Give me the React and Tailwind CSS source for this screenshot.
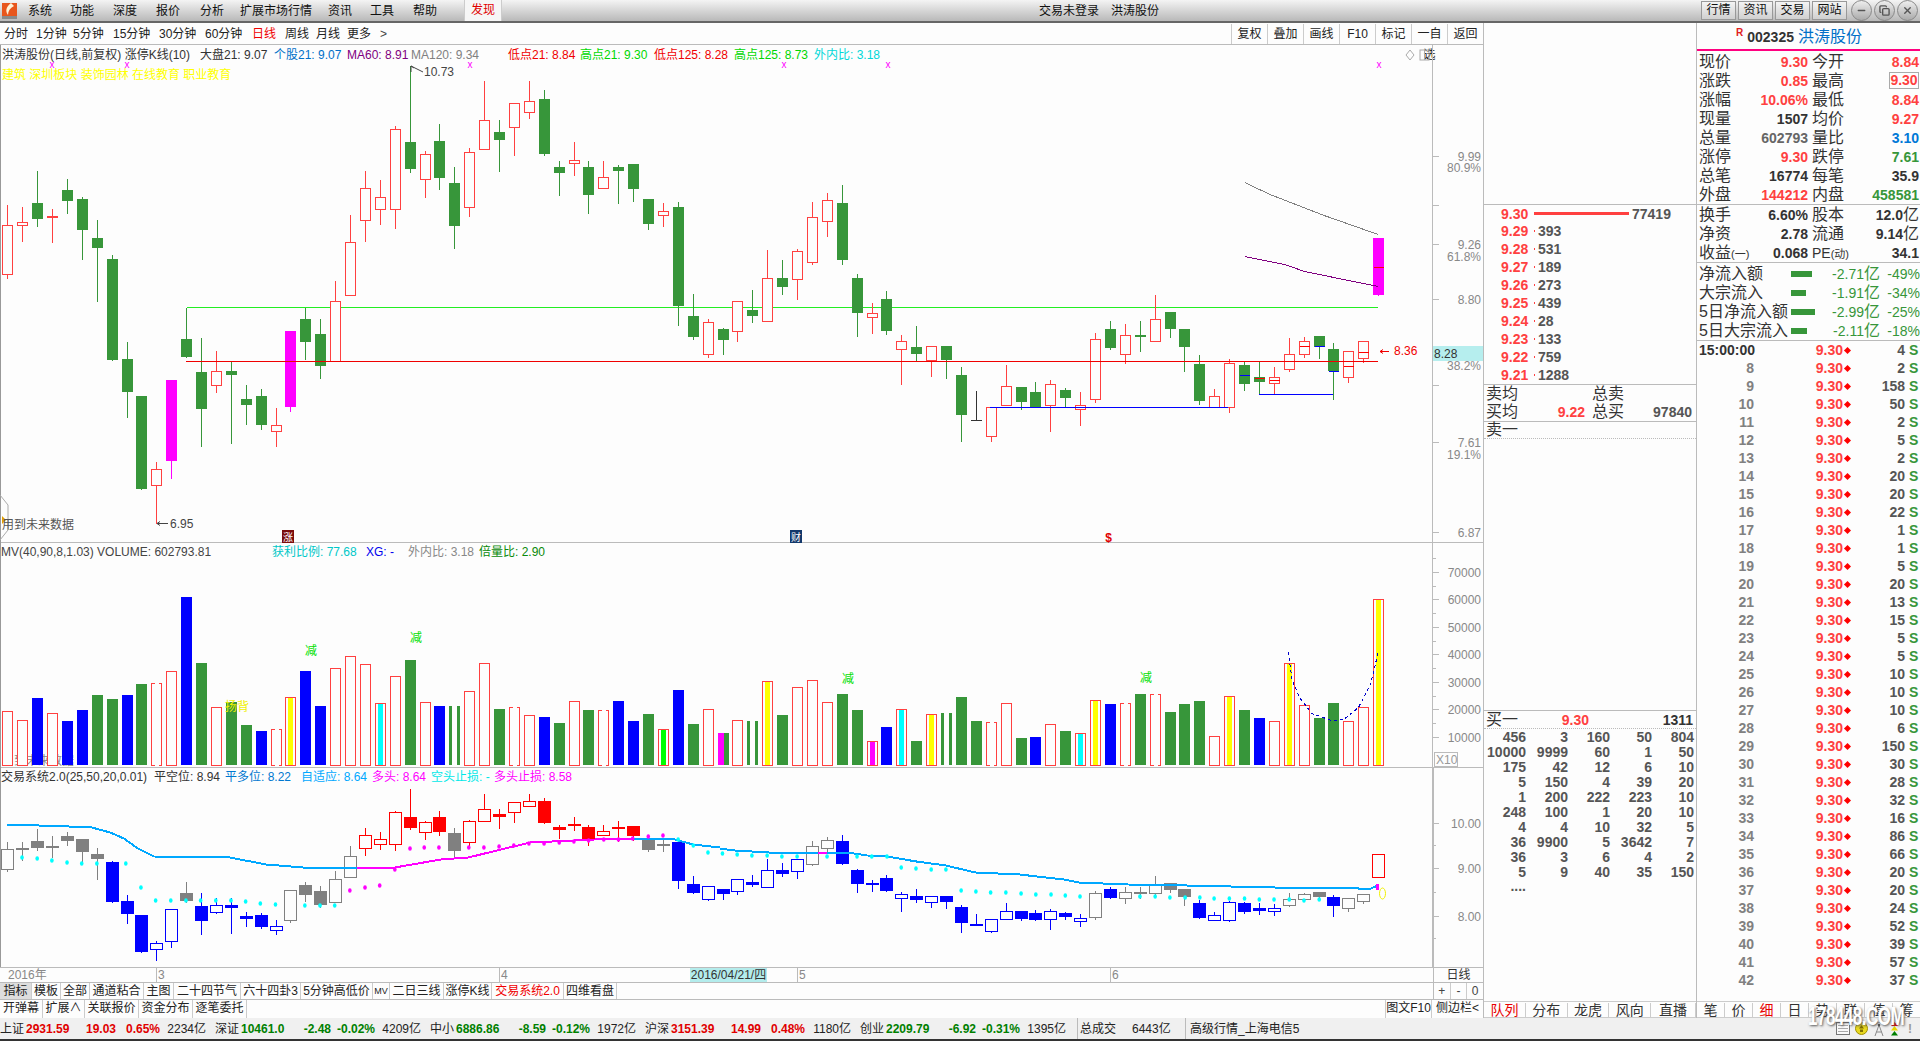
import React from "react";
import { Minus, Copy, X } from "lucide-react";

// pixel helpers: chart data was read in crop coordinates
const cx = (i) => Math.round(7.3 + 14.9 * i) + 0.5;
const y1 = (z) => Math.round(60 + z / 3) + 0.5;
const y2 = (z) => Math.round(540 + z / 3) + 0.5;
const fxA = (x) => x / 2.178;
const fxB = (x) => 720 + x / 2.036;

const RED = "#ff4040";
const GREEN = "#37963a";
const BLUE = "#0000ff";
const MAG = "#ff00ff";

// [wickTop, bodyTop, bodyBottom, wickBottom, type, tickY, tickColor]
const mainCandles = [
  [432, 496, 641, 654, "r"], [438, 487, 494, 543, "r"], [330, 429, 477, 498, "g"], [444, 468, 473, 546, "s"],
  [353, 390, 423, 459, "g"], [408, 417, 510, 597, "g"], [477, 534, 564, 723, "g"], [582, 597, 900, 900, "g"],
  [843, 897, 996, 1071, "g"], [1008, 1008, 1287, 1287, "g"], [1203, 1228, 1274, 1390, "r"], [960, 960, 1203, 1254, "m"],
  [742, 837, 891, 891, "g"], [831, 936, 1047, 1158, "g"], [870, 934, 974, 996, "r"], [900, 933, 945, 1149, "g"],
  [972, 1017, 1035, 1092, "g"], [984, 1008, 1095, 1107, "g"], [1041, 1096, 1114, 1158, "r"], [813, 813, 1041, 1053, "m"],
  [742, 777, 846, 897, "g"], [774, 822, 918, 954, "g"], [660, 724, 903, 903, "r"], [462, 547, 704, 704, "r"],
  [330, 385, 479, 543, "r"], [357, 412, 446, 492, "r"], [195, 208, 446, 504, "r"], [15, 246, 327, 336, "g"],
  [270, 283, 356, 411, "r"], [189, 243, 354, 387, "g"], [318, 369, 498, 564, "g"], [261, 277, 440, 468, "r"],
  [60, 181, 266, 266, "r"], [177, 216, 240, 333, "g"], [126, 130, 200, 285, "r"], [60, 124, 155, 174, "r"],
  [87, 117, 282, 285, "g"], [300, 321, 339, 405, "g"], [243, 301, 308, 345, "r"], [300, 321, 405, 459, "g"],
  [300, 352, 383, 384, "r"], [312, 321, 333, 429, "g"], [312, 312, 387, 423, "g"], [417, 417, 492, 507, "g"],
  [426, 454, 464, 498, "r"], [423, 441, 738, 795, "g"], [699, 768, 831, 837, "g"], [774, 787, 881, 891, "r"],
  [801, 807, 840, 882, "g"], [724, 724, 812, 843, "r"], [687, 750, 768, 786, "g"], [567, 655, 782, 782, "r"],
  [597, 654, 681, 702, "g"], [564, 574, 656, 717, "r"], [423, 472, 605, 612, "r"], [396, 421, 482, 528, "r"],
  [372, 429, 600, 612, "g"], [639, 654, 759, 828, "g"], [726, 760, 770, 819, "r"], [690, 717, 813, 822, "g"],
  [822, 844, 866, 972, "r"], [795, 861, 882, 903, "g"], [858, 859, 899, 948, "r"], [855, 858, 900, 954, "g"],
  [918, 945, 1065, 1143, "g"], [990, 1079, 1080, 1080, "k"], [1041, 1042, 1127, 1143, "r"], [912, 979, 1034, 1034, "r"],
  [981, 981, 1026, 1047, "g"], [963, 996, 1042, 1042, "g"], [957, 973, 1034, 1113, "r"], [981, 990, 1014, 1038, "g"],
  [993, 1036, 1048, 1095, "r"], [816, 838, 1016, 1026, "r"], [780, 807, 864, 867, "g"], [789, 826, 881, 909, "r"],
  [780, 825, 831, 873, "g"], [702, 778, 842, 843, "r"], [756, 756, 807, 831, "g"], [807, 807, 861, 933, "g"],
  [882, 912, 1023, 1032, "g"], [984, 1009, 1042, 1042, "r"], [894, 910, 1040, 1056, "r"],
  [900, 915, 972, 990, "g", 946, BLUE], [903, 951, 966, 1003, "g", 955, "#ff0000"], [918, 952, 968, 1003, "r", 960, "#ff0000"],
  [831, 883, 926, 932, "r"], [828, 844, 881, 891, "r", 859, "#ff0000"], [826, 828, 860, 894, "g", 859, BLUE],
  [846, 867, 934, 1017, "g", 934, BLUE], [870, 874, 950, 966, "r", 919, "#ff0000"], [844, 844, 893, 905, "r", 875, "#ff0000"],
  [534, 534, 705, 705, "m", 620, "#ff0000"],
];

// [top, kind, inner]  kind: r hollow, d broken hollow, b blue, g green, t two thin green
const volBars = [
  [514, "r"], [541, "r"], [471, "b"], [520, "r"], [540, "b"], [507, "b"], [462, "g"], [474, "g"], [462, "b"], [429, "g"],
  [429, "d"], [394, "r"], [168, "b"], [366, "g"], [502, "r"], [483, "g"], [552, "g"], [570, "b"], [567, "d"], [471, "r", "#ffff00"],
  [390, "b"], [495, "b"], [385, "r"], [349, "r"], [373, "r"], [490, "r", "#00ffff"], [409, "r"], [357, "g"], [487, "r"], [495, "b"],
  [495, "t"], [454, "r"], [370, "r"], [504, "g"], [502, "d"], [526, "r"], [528, "b"], [546, "g"], [484, "r"], [507, "g"],
  [510, "d"], [480, "b"], [540, "b"], [519, "g"], [567, "r", "#00ff00"], [447, "b"], [549, "g"], [507, "r"], [576, "g", MAG], [541, "r"],
  [540, "t"], [424, "r", "#ffff00"], [522, "g"], [442, "r"], [421, "r"], [487, "r"], [459, "g"], [507, "g"], [604, "r", MAG], [558, "b"],
  [508, "r", "#00ffff"], [600, "g"], [522, "r", "#ffff00"], [516, "t"], [468, "g"], [540, "g"], [546, "d"], [490, "r"], [591, "g"], [588, "b"],
  [552, "r"], [570, "g"], [579, "r", "#00ffff"], [481, "r", "#ffff00"], [489, "b"], [490, "d"], [459, "g"], [463, "d"], [513, "g"], [489, "g"],
  [480, "g"], [589, "r"], [468, "r", "#ffff00"], [507, "g"], [531, "b"], [544, "r"], [370, "r", "#ffff00"], [496, "r"], [531, "g"], [486, "g"],
  [544, "r"], [502, "r"], [178, "r", "#ffff00"],
];

// [wickTop, bodyTop, bodyBottom, wickBottom, colour, solid]
const G = "#808080";
const B = "#0000ff";
const R = "#ff0000";
const sysCandles = [
  [903, 928, 987, 993, G, 0], [903, 924, 930, 960, G, 1], [864, 903, 924, 930, G, 1], [885, 918, 920, 951, G, 0], [873, 888, 903, 915, G, 1],
  [894, 897, 936, 963, G, 1], [921, 942, 957, 1017, G, 1], [960, 966, 1086, 1086, B, 1], [1062, 1083, 1122, 1149, B, 1], [1125, 1125, 1236, 1236, B, 1],
  [1200, 1210, 1228, 1260, B, 0], [1108, 1108, 1202, 1221, B, 0], [1023, 1059, 1083, 1086, G, 1], [1056, 1098, 1143, 1182, B, 1], [1071, 1096, 1115, 1119, B, 0],
  [1071, 1095, 1103, 1179, B, 1], [1113, 1128, 1137, 1158, B, 1], [1116, 1125, 1161, 1164, B, 1], [1137, 1159, 1169, 1182, B, 0], [1050, 1051, 1139, 1146, G, 0],
  [1023, 1035, 1065, 1083, G, 1], [1035, 1053, 1095, 1101, G, 1], [990, 1018, 1085, 1086, G, 0], [915, 949, 1010, 1010, G, 0], [861, 886, 923, 945, R, 0],
  [873, 898, 911, 927, R, 0], [810, 817, 911, 930, R, 0], [744, 831, 864, 867, R, 1], [840, 847, 875, 897, R, 0], [810, 831, 876, 885, R, 1],
  [861, 879, 933, 954, G, 1], [837, 844, 907, 918, R, 0], [759, 808, 842, 843, R, 0], [804, 822, 831, 864, R, 1], [783, 787, 815, 846, R, 0],
  [759, 784, 797, 798, R, 0], [771, 783, 849, 849, R, 1], [852, 861, 870, 894, R, 1], [828, 853, 858, 870, R, 1], [852, 861, 897, 915, R, 1],
  [852, 874, 884, 885, R, 0], [840, 861, 867, 903, R, 1], [858, 858, 888, 900, R, 1], [897, 897, 930, 933, G, 1], [897, 912, 918, 933, G, 1],
  [900, 906, 1023, 1044, B, 1], [1005, 1032, 1059, 1059, B, 1], [1035, 1039, 1077, 1080, B, 0], [1044, 1048, 1062, 1077, B, 1], [1014, 1018, 1052, 1062, B, 0],
  [1002, 1026, 1035, 1038, B, 1], [954, 990, 1040, 1040, B, 0], [966, 990, 1002, 1008, B, 1], [957, 958, 992, 1014, B, 0], [900, 919, 971, 975, G, 0],
  [888, 901, 923, 935, G, 0], [882, 903, 972, 972, B, 1], [984, 990, 1032, 1056, B, 1], [1017, 1029, 1035, 1053, B, 1], [1002, 1014, 1053, 1053, B, 1],
  [1053, 1063, 1073, 1113, B, 0], [1044, 1068, 1080, 1086, B, 1], [1065, 1069, 1085, 1101, B, 0], [1065, 1068, 1086, 1104, B, 1], [1092, 1101, 1149, 1176, B, 1],
  [1119, 1152, 1154, 1155, B, 1], [1137, 1138, 1172, 1176, B, 0], [1086, 1114, 1136, 1137, B, 0], [1113, 1113, 1137, 1140, B, 1], [1107, 1119, 1140, 1140, B, 1],
  [1104, 1114, 1136, 1167, B, 0], [1113, 1119, 1131, 1137, B, 1], [1119, 1134, 1142, 1158, B, 0], [1050, 1060, 1130, 1137, G, 0], [1038, 1047, 1074, 1074, B, 1],
  [1038, 1057, 1075, 1089, G, 0], [1038, 1056, 1058, 1074, G, 1], [1005, 1036, 1060, 1062, G, 0], [1029, 1029, 1050, 1056, G, 1], [1047, 1047, 1071, 1095, G, 1],
  [1077, 1089, 1134, 1134, B, 1], [1113, 1126, 1139, 1140, B, 0], [1080, 1087, 1139, 1142, B, 0], [1083, 1089, 1116, 1119, B, 1], [1086, 1104, 1113, 1122, B, 1],
  [1089, 1105, 1112, 1125, B, 0], [1056, 1078, 1095, 1098, G, 0], [1056, 1063, 1076, 1083, G, 0], [1056, 1056, 1071, 1071, G, 1], [1062, 1071, 1098, 1128, B, 1],
  [1071, 1075, 1103, 1113, G, 0], [1062, 1063, 1082, 1089, G, 0], [942, 942, 1010, 1010, R, 0],
];

const blueLineA = [[15, 851], [80, 851], [85, 855], [145, 855], [150, 858], [200, 862], [240, 875], [270, 893], [300, 925], [335, 947], [500, 952], [580, 972], [660, 981], [778, 981]];
const magentaLine = [[778, 981], [860, 981], [960, 957], [1020, 950], [1100, 925], [1155, 905], [1250, 899], [1340, 893], [1380, 893]];
const blueLineB = [[1380, 893], [1470, 897], [1510, 911], [1568, 920]];
const blueLineC = [[0, 924], [30, 930], [65, 933], [100, 936], [260, 936], [300, 945], [340, 948], [400, 963], [460, 975], [520, 997], [610, 1002], [700, 1018], [730, 1025], [830, 1031], [950, 1034], [1040, 1038], [1130, 1041], [1280, 1041], [1300, 1044], [1325, 1044], [1340, 1035]];

const cyanA = [[48, 951], [81, 954], [113, 960], [146, 966], [178, 969], [211, 969], [274, 969], [307, 1041], [339, 1080], [372, 1080], [405, 1080], [437, 1080], [470, 1080], [503, 1080], [535, 1083], [567, 1089], [600, 1092], [664, 1095], [697, 1095], [729, 1095], [1477, 897], [1510, 915], [1542, 936]];
const cyanB = [[5, 939], [35, 942], [65, 945], [96, 945], [126, 948], [157, 948], [218, 948], [279, 948], [309, 948], [340, 948], [369, 981], [399, 984], [430, 987], [460, 987], [491, 1050], [521, 1053], [551, 1056], [582, 1056], [613, 1059], [643, 1062], [674, 1062], [703, 1065], [733, 1068], [855, 1068], [886, 1068], [916, 1071], [947, 1071], [977, 1071], [1006, 1074], [1037, 1074], [1068, 1074], [1098, 1077], [1128, 1077], [1159, 1077], [1189, 1080], [1220, 1077]];
const magDots = [[762, 1050], [795, 1041], [827, 1035], [860, 987], [893, 924], [924, 921], [956, 921], [1021, 921], [1054, 921], [1087, 918], [1119, 915], [1152, 909], [1185, 909], [1218, 906], [1250, 903], [1282, 900], [1315, 897], [1347, 897], [1378, 893], [1412, 888], [1444, 885]];
const volCurve = [[1157, 336], [1165, 420], [1180, 470], [1205, 520], [1245, 541], [1270, 538], [1300, 500], [1325, 430], [1340, 336]];

const pts = (list, fx) => list.map(([x, z]) => `${fx(x)},${y2(z)}`).join(" ");

function Logo() {
  return (
    <svg width="16" height="18" viewBox="0 0 16 18" className="shrink-0">
      <rect x="0" y="1" width="15" height="14" fill="#e8561c" />
      <path d="M9 1 C4 5 3 9 6 13 C6 9 8 6 12 4 Z" fill="#fff3d8" />
      <rect x="0" y="14" width="15" height="3" fill="#8a8a8a" />
    </svg>
  );
}

function TitleBar() {
  const menus = [
    ["系统", "w-[42px]"], ["功能", "w-[43px]"], ["深度", "w-[43px]"], ["报价", "w-[44px]"], ["分析", "w-[40px]"],
    ["扩展市场行情", "w-[88px]"], ["资讯", "w-[42px]"], ["工具", "w-[43px]"], ["帮助", "w-[43px]"],
  ];
  return (
    <div className="flex items-center h-[23px] shrink-0 border-b-2 border-[#666] bg-gradient-to-b from-[#f4f4f4] to-[#b9b9b9] text-[12px] text-[#111]">
      <div className="w-[28px] pl-[2px]"><Logo /></div>
      {menus.map(([m, w]) => (
        <div key={m} className={w}>{m}</div>
      ))}
      <div className="ml-[8px] w-[38px] h-full text-center leading-[21px] text-[#e00000] bg-[#f6f6f6] border-x border-[#ccc]">发现</div>
      <div className="ml-[537px] w-[72px]">交易未登录</div>
      <div>洪涛股份</div>
      <div className="ml-auto flex items-center gap-[2px] pr-[2px]">
        {["行情", "资讯", "交易", "网站"].map((t) => (
          <div key={t} className="w-[35px] h-[19px] leading-[17px] text-center border border-[#999] bg-gradient-to-b from-[#f4f4f4] to-[#d0d0d0]">{t}</div>
        ))}
        <div className="ml-[2px] flex gap-[2px]">
          {[Minus, Copy, X].map((Ic, i) => (
            <div key={i} className="w-[21px] h-[21px] rounded-full border border-[#888] bg-gradient-to-b from-[#eeeeee] to-[#aaaaaa] flex items-center justify-center text-[#555]">
              <Ic size={11} strokeWidth={3} />
            </div>
          ))}
        </div>
      </div>
    </div>
  );
}

function PeriodRow() {
  const items = [
    ["分时", "w-[32px]"], ["1分钟", "w-[37px]"], ["5分钟", "w-[40px]"], ["15分钟", "w-[46px]"], ["30分钟", "w-[46px]"],
    ["60分钟", "w-[47px]"], ["日线", "w-[33px] text-[#f00000]"], ["周线", "w-[31px]"], ["月线", "w-[31px]"], ["更多", "w-[33px]"],
  ];
  return (
    <div className="flex items-center h-[22px] shrink-0 border-b border-[#bbb] text-[12px] text-[#222] pl-[4px] pt-[1px]">
      {items.map(([t, c]) => (
        <div key={t} className={c}>{t}</div>
      ))}
      <div className="text-[#444]">&gt;</div>
      <div className="ml-auto flex h-full">
        {["复权", "叠加", "画线", "F10", "标记", "一自选", "返回"].map((t) => (
          <div key={t} className="w-[36px] text-center leading-[21px] border-l border-[#ccc]">{t}</div>
        ))}
      </div>
    </div>
  );
}

function Legend({ items, className }) {
  return (
    <div className={`relative flex h-[15px] items-center whitespace-nowrap text-[12px] ${className || ""}`}>
      {items.map(([t, w, c]) => (
        <div key={t} className={`${w} ${c}`}>{t}</div>
      ))}
    </div>
  );
}

function MainPane() {
  const labels = [[287, "9.99"], [320, "80.9%"], [553, "9.26"], [587, "61.8%"], [718, "8.80"], [915, "38.2%"], [1147, "7.61"], [1181, "19.1%"], [1415, "6.87"]];
  const ticks = [287, 436, 553, 718, 975, 1147, 1415];
  const marks = [52, 127, 470, 784, 888, 1379];
  return (
    <div className="relative h-[498px] shrink-0 border-b border-[#bbb]">
      <svg className="absolute inset-0" width="1483" height="498" viewBox="0 45 1483 498" shapeRendering="crispEdges">
        <line x1="0.5" y1="45" x2="0.5" y2="543" stroke="#999" />
        <line x1="1432.5" y1="45" x2="1432.5" y2="543" stroke="#bbb" />
        {ticks.map((z) => (
          <line key={z} x1="1433" y1={y1(z)} x2="1439" y2={y1(z)} stroke="#bbb" />
        ))}
        <rect x="1433" y="346" width="50" height="15" fill="#b6eeee" />
        <line x1="186.5" y1="307.5" x2="1378" y2="307.5" stroke="#22ee22" />
        <line x1="186.5" y1="307.5" x2="186.5" y2="340" stroke={GREEN} />
        {mainCandles.map(([wt, bt, bb, wb, type, tick, tc], i) => {
          const x = cx(i);
          const col = type === "r" || type === "s" ? RED : type === "m" ? MAG : type === "k" ? "#333" : GREEN;
          const solid = type !== "r";
          return (
            <g key={i}>
              <line x1={x} y1={y1(wt)} x2={x} y2={y1(wb)} stroke={col} />
              {solid ? (
                <rect x={x - 5.5} y={y1(bt) - 0.5} width="11" height={Math.max(1, y1(bb) - y1(bt))} fill={col} />
              ) : (
                <rect x={x - 5} y={y1(bt)} width="10" height={y1(bb) - y1(bt)} fill="#fdfdfd" stroke={col} />
              )}
              {tick ? <line x1={x - 5} y1={y1(tick)} x2={x + 5} y2={y1(tick)} stroke={tc} /> : null}
            </g>
          );
        })}
        <line x1="186" y1="361.5" x2="1378" y2="361.5" stroke="#f00000" />
        <line x1={fxB(550)} y1={y1(1042)} x2={fxB(1035)} y2={y1(1042)} stroke={BLUE} />
        <line x1={fxB(1097)} y1={y1(1002)} x2={fxB(1248)} y2={y1(1002)} stroke={BLUE} />
        <polyline points={`${fxB(1068)},${y1(367)} ${fxB(1120)},${y1(402)} ${fxB(1230)},${y1(465)} ${fxB(1340)},${y1(523)}`} fill="none" stroke="#808080" />
        <polyline points={`${fxB(1068)},${y1(589)} ${fxB(1150)},${y1(612)} ${fxB(1190)},${y1(632)} ${fxB(1340)},${y1(678)}`} fill="none" stroke="#800080" />
        <g shapeRendering="auto">
          {labels.map(([z, t]) => (
            <text key={t} x="1481" y={y1(z) + 4} textAnchor="end" fontSize="12" fill="#888">{t}</text>
          ))}
          <text x="1434" y="358" fontSize="12" fill="#333">8.28</text>
          {marks.map((x) => (
            <text key={x} x={x} y="68" textAnchor="middle" fontSize="10" fill={MAG}>x</text>
          ))}
          <text x="424" y="76" fontSize="12" fill="#444">10.73</text>
          <path d="M411 66 L411 72 M411 66 L414 68 M411 66 L423 72" stroke="#444" fill="none" />
          <text x="170" y="528" fontSize="12" fill="#444">6.95</text>
          <path d="M157 523.5 H168 M157 523.5 l3 -2 M157 523.5 l3 2" stroke="#444" fill="none" />
          <text x="1394" y="355" fontSize="12" fill="#f00000">8.36</text>
          <path d="M1380 351.5 H1389 M1380 351.5 l3 -2 M1380 351.5 l3 2" stroke="#f00000" fill="none" />
          <path d="M1410 50 L1414 55 L1410 60 L1406 55 Z" fill="none" stroke="#aaa" />
          <rect x="1420" y="50" width="9" height="10" fill="none" stroke="#aaa" />
          <line x1="1424.5" y1="50" x2="1424.5" y2="60" stroke="#aaa" />
          <path d="M0 495 L8 505 L8 530 L0 540" fill="none" stroke="#aaa" />
          <path d="M2 516 L6 520 L2 524 Z" fill="#e0a000" />
          <text x="2" y="529" fontSize="12" fill="#555">用到未来数据</text>
          <rect x="282" y="530" width="12" height="13" fill="#7a0c0c" />
          <text x="288" y="541" textAnchor="middle" fontSize="10" fill="#fff">涨</text>
          <rect x="790" y="530" width="12" height="13" fill="#12386b" />
          <text x="796" y="541" textAnchor="middle" fontSize="10" fill="#fff">财</text>
          <text x="1108.5" y="542" textAnchor="middle" fontSize="12" fontWeight="bold" fill="#e00000">$</text>
        </g>
      </svg>
      <Legend
        className="pl-[2px] mt-[2px] text-[#333]"
        items={[
          ["洪涛股份(日线,前复权) 涨停K线(10)", "w-[198px]", "text-[#333]"],
          ["大盘21: 9.07", "w-[74px]", "text-[#333]"],
          ["个股21: 9.07", "w-[73px]", "text-[#0070c8]"],
          ["MA60: 8.91", "w-[64px]", "text-[#800080]"],
          ["MA120: 9.34", "w-[97px]", "text-[#808080]"],
          ["低点21: 8.84", "w-[72px]", "text-[#f00000]"],
          ["高点21: 9.30", "w-[74px]", "text-[#00d800]"],
          ["低点125: 8.28", "w-[80px]", "text-[#f00000]"],
          ["高点125: 8.73", "w-[80px]", "text-[#00d800]"],
          ["外内比: 3.18", "w-[70px]", "text-[#00d8d8]"],
        ]}
      />
      <div className="relative pl-[2px] mt-[6px] text-[12px] leading-[15px] text-[#ffff00] whitespace-pre">建筑 深圳板块 装饰园林 在线教育 职业教育</div>
    </div>
  );
}

function VolPane() {
  const labels = [[97, "70000"], [178, "60000"], [262, "50000"], [343, "40000"], [427, "30000"], [508, "20000"], [592, "10000"]];
  const minor = [55, 139, 220, 304, 385, 469, 550];
  return (
    <div className="relative h-[225px] shrink-0 border-b border-[#bbb]">
      <svg className="absolute inset-0" width="1483" height="225" viewBox="0 543 1483 225" shapeRendering="crispEdges">
        <line x1="0.5" y1="543" x2="0.5" y2="768" stroke="#999" />
        <line x1="1432.5" y1="543" x2="1432.5" y2="768" stroke="#bbb" />
        {labels.map(([z]) => (
          <line key={z} x1="1433" y1={y2(z)} x2="1439" y2={y2(z)} stroke="#bbb" />
        ))}
        {minor.map((z) => (
          <line key={z} x1="1433" y1={y2(z)} x2="1436" y2={y2(z)} stroke="#bbb" />
        ))}
        <text x="2" y="765" fontSize="12" fill="#888" shapeRendering="auto">用到未来数据</text>
        {volBars.map(([top, kind, inner], i) => {
          const x = cx(i);
          const t = y2(top);
          const h = 765 - t;
          if (kind === "r") {
            return (
              <g key={i}>
                <rect x={x - 5} y={t} width="10" height={h} fill="#fdfdfd" stroke={RED} />
                {inner ? <rect x={x - 2.5} y={t + 0.5} width="5" height={h - 1} fill={inner} /> : null}
              </g>
            );
          }
          if (kind === "d") {
            // hollow bar whose top and bottom edges are open in the middle
            return (
              <path
                key={i}
                d={`M${x - 2} ${t} H${x - 5} V765 H${x - 2} M${x + 2} ${t} H${x + 5} V765 H${x + 2}`}
                fill="none"
                stroke={RED}
              />
            );
          }
          if (kind === "t") {
            return (
              <g key={i}>
                <rect x={x - 5.5} y={t} width="3" height={h} fill={GREEN} />
                <rect x={x + 2.5} y={t} width="3" height={h} fill={GREEN} />
              </g>
            );
          }
          return (
            <g key={i}>
              <rect x={x - 5.5} y={t} width="11" height={h} fill={kind === "b" ? BLUE : GREEN} />
              {inner ? <rect x={x - 5.5} y={t} width="6" height={h} fill={inner} /> : null}
            </g>
          );
        })}
        <polyline points={pts(volCurve, fxB)} fill="none" stroke="#0000cc" strokeDasharray="3 3" />
        <g shapeRendering="auto">
          {labels.map(([z, t]) => (
            <text key={t} x="1481" y={y2(z) + 4} textAnchor="end" fontSize="12" fill="#888">{t}</text>
          ))}
          <rect x="1434.5" y="752.5" width="23" height="14" fill="none" stroke="#bbb" />
          <text x="1436" y="764" fontSize="12" fill="#999">X10</text>
          <text x="225" y="711" fontSize="12" fill="#f0f000">扬背</text>
          <text x="305" y="655" fontSize="12" fill="#00e000">减</text>
          <text x="410" y="642" fontSize="12" fill="#00e000">减</text>
          <text x="842" y="683" fontSize="12" fill="#00e000">减</text>
          <text x="1140" y="682" fontSize="12" fill="#00e000">减</text>
        </g>
      </svg>
      <Legend
        className="pl-[1px] mt-[1px]"
        items={[
          ["MV(40,90,8,1.03) VOLUME: 602793.81", "w-[271px]", "text-[#444]"],
          ["获利比例: 77.68", "w-[94px]", "text-[#00c8c8]"],
          ["XG: -", "w-[42px]", "text-[#0000ee]"],
          ["外内比: 3.18", "w-[71px]", "text-[#888]"],
          ["倍量比: 2.90", "w-[80px]", "text-[#0a8a0a]"],
        ]}
      />
    </div>
  );
}

function SysPane() {
  const labels = [[848, "10.00"], [985, "9.00"], [1127, "8.00"]];
  const minor = [916, 1057, 1195];
  return (
    <div className="relative h-[199px] shrink-0">
      <svg className="absolute inset-0" width="1483" height="199" viewBox="0 768 1483 199" shapeRendering="crispEdges">
        <line x1="0.5" y1="768" x2="0.5" y2="967" stroke="#999" />
        <rect x="1432" y="768" width="2" height="199" fill="#bbb" />
        {labels.map(([z]) => (
          <line key={z} x1="1433" y1={y2(z)} x2="1439" y2={y2(z)} stroke="#bbb" />
        ))}
        {minor.map((z) => (
          <line key={z} x1="1433" y1={y2(z)} x2="1436" y2={y2(z)} stroke="#bbb" />
        ))}
        {sysCandles.map(([wt, bt, bb, wb, col, solid], i) => {
          const x = cx(i);
          return (
            <g key={i}>
              <line x1={x} y1={y2(wt)} x2={x} y2={Math.min(y2(wb), 967)} stroke={col} />
              {solid ? (
                <rect x={x - 6.5} y={y2(bt) - 0.5} width="13" height={Math.max(2, y2(bb) - y2(bt))} fill={col} />
              ) : (
                <rect x={x - 6} y={y2(bt)} width="12" height={y2(bb) - y2(bt)} fill="#fdfdfd" stroke={col} />
              )}
            </g>
          );
        })}
        <polyline points={pts(blueLineA, fxA)} fill="none" stroke="#00a8ff" strokeWidth="2" />
        <polyline points={pts(magentaLine, fxA)} fill="none" stroke={MAG} strokeWidth="2" />
        <polyline points={pts(blueLineB, fxA)} fill="none" stroke="#00a8ff" strokeWidth="2" />
        <polyline points={pts(blueLineC, fxB)} fill="none" stroke="#00a8ff" strokeWidth="2" />
        <line x1={fxB(200)} y1={y2(936)} x2={fxB(218)} y2={y2(936)} stroke={MAG} strokeWidth="2" />
        <rect x="1376" y="884" width="3" height="6" fill={MAG} />
        <g shapeRendering="auto">
          {cyanA.map(([x, z]) => (
            <ellipse key={x} cx={fxA(x)} cy={y2(z)} rx="1.8" ry="2.2" fill="#00ffff" />
          ))}
          {cyanB.map(([x, z]) => (
            <ellipse key={x} cx={fxB(x)} cy={y2(z)} rx="1.8" ry="2.2" fill="#00ffff" />
          ))}
          {magDots.map(([x, z]) => (
            <ellipse key={x} cx={fxA(x)} cy={y2(z)} rx="1.8" ry="2.2" fill={MAG} />
          ))}
          <ellipse cx="1382.5" cy="893.5" rx="3" ry="5.5" fill="none" stroke="#f0f000" />
          {labels.map(([z, t]) => (
            <text key={t} x="1481" y={y2(z) + 4} textAnchor="end" fontSize="12" fill="#888">{t}</text>
          ))}
        </g>
      </svg>
      <Legend
        className="pl-[1px] mt-[1px]"
        items={[
          ["交易系统2.0(25,50,20,0.01)", "w-[153px]", "text-[#333]"],
          ["平空位: 8.94", "w-[71px]", "text-[#333]"],
          ["平多位: 8.22", "w-[76px]", "text-[#0078d0]"],
          ["自适应: 8.64", "w-[71px]", "text-[#00a8ff]"],
          ["多头: 8.64", "w-[59px]", "text-[#ff00ff]"],
          ["空头止损: -", "w-[63px]", "text-[#00e8e8]"],
          ["多头止损: 8.58", "w-[90px]", "text-[#ff00ff]"],
        ]}
      />
    </div>
  );
}

function DateRow() {
  return (
    <div className="relative flex h-[16px] shrink-0 border-y border-[#bbb] text-[12px] leading-[14px] text-[#888]">
      <div className="w-[156px] pl-[8px]">2016年</div>
      <div className="w-[343px] border-l border-[#bbb] pl-[1px]">3</div>
      <div className="w-[191px] border-l border-[#bbb] pl-[1px]">4</div>
      <div className="w-[77px] bg-[#b3ecec] text-center text-[#333]">2016/04/21/四</div>
      <div className="w-[30px]" />
      <div className="w-[313px] border-l border-[#bbb] pl-[1px]">5</div>
      <div className="w-[323px] border-l border-[#bbb] pl-[1px]">6</div>
      <div className="w-[50px] border-l border-[#bbb] text-center text-[#333]">日线</div>
    </div>
  );
}

function IndicatorTabs() {
  const tabs = [
    ["指标", 32], ["模板", 29], ["全部", 29], ["通道粘合", 54], ["主图", 30], ["二十四节气", 67], ["六十四卦3", 60], ["5分钟高低价", 72],
    ["MV", 17], ["二日三线", 54], ["涨停K线", 48], ["交易系统2.0", 72], ["四维看盘", 53],
  ];
  return (
    <>
      <div className="flex h-[17px] shrink-0 border-b border-[#bbb] text-[12px] leading-[17px] text-[#222]">
        {tabs.map(([t, w]) => (
          <div
            key={t}
            style={{ width: w }}
            className={`text-center border-r border-[#ccc] whitespace-nowrap overflow-hidden ${t === "指标" ? "bg-[#dddddd]" : ""} ${t === "交易系统2.0" ? "text-[#f00000]" : ""} ${t === "MV" ? "text-[9px]" : ""}`}
          >
            {t}
          </div>
        ))}
        <div className="ml-auto flex w-[50px] border-l border-[#bbb] text-[#444]">
          <div className="flex-1 text-center border-r border-[#ccc]">+</div>
          <div className="flex-1 text-center border-r border-[#ccc]">-</div>
          <div className="flex-1 text-center">0</div>
        </div>
      </div>
      <div className="flex h-[18px] shrink-0 text-[12px] leading-[17px] text-[#222]">
        {[["开弹幕", 43], ["扩展∧", 42], ["关联报价", 54], ["资金分布", 54], ["逐笔委托", 54]].map(([t, w]) => (
          <div key={t} style={{ width: w }} className="text-center border-r border-[#ccc] whitespace-nowrap">{t}</div>
        ))}
        <div className="ml-auto w-[46px] text-center border-l border-[#ccc] whitespace-nowrap">图文F10</div>
        <div className="w-[52px] text-center border-l border-[#ccc] whitespace-nowrap">侧边栏&lt;</div>
      </div>
    </>
  );
}

const ladder = [["9.29", "393"], ["9.28", "531"], ["9.27", "189"], ["9.26", "273"], ["9.25", "439"], ["9.24", "28"], ["9.23", "133"], ["9.22", "759"], ["9.21", "1288"]];
const queue = [
  [456, 3, 160, 50, 804], [10000, 9999, 60, 1, 50], [175, 42, 12, 6, 10], [5, 150, 4, 39, 20], [1, 200, 222, 223, 10],
  [248, 100, 1, 20, 10], [4, 4, 10, 32, 5], [36, 9900, 5, 3642, 7], [36, 3, 6, 4, 2], [5, 9, 40, 35, 150],
];

function MiddleCol() {
  return (
    <div className="flex flex-col w-[213px] shrink-0 border-r border-[#bbb] text-[14px] [&_*]:leading-none">
      <div className="h-[182px] shrink-0 border-b border-[#bbb]" />
      <div className="h-[180px] shrink-0 border-b border-[#bbb] text-[#555] font-bold">
        <div className="flex items-center h-[17px]">
          <div className="w-[50px] pl-[17px] text-[#ff4040]">9.30</div>
          <div className="w-[95px] h-[3px] bg-[#ff4040]" />
          <div className="ml-[3px]">77419</div>
        </div>
        {ladder.map(([p, v]) => (
          <div key={p} className="flex items-center h-[18px]">
            <div className="w-[50px] pl-[17px] text-[#ff4040]">{p}</div>
            <div className="w-px h-[2px] bg-[#ff4040] mr-[3px]" />
            <div>{v}</div>
          </div>
        ))}
      </div>
      <div className="h-[37px] shrink-0 border-b border-[#bbb] text-[#555] pl-[2px]">
        <div className="flex items-center h-[18px]">
          <div className="w-[106px] text-[16px] font-normal text-[#333]">卖均</div>
          <div className="text-[16px] text-[#333]">总卖</div>
        </div>
        <div className="flex items-center h-[18px]">
          <div className="w-[32px] text-[16px] text-[#333]">买均</div>
          <div className="w-[67px] text-right font-bold text-[#ff4040]">9.22</div>
          <div className="ml-[7px] text-[16px] text-[#333]">总买</div>
          <div className="w-[68px] text-right font-bold">97840</div>
        </div>
      </div>
      <div className="h-[17px] shrink-0 border-b border-dotted border-[#bbb] pl-[2px] text-[16px] text-[#333] flex items-center">卖一</div>
      <div className="flex-1 border-b border-[#bbb]" />
      <div className="h-[18px] shrink-0 border-b border-dotted border-[#bbb] pl-[2px] flex items-center">
        <div className="w-[32px] text-[16px] text-[#333]">买一</div>
        <div className="w-[36px] ml-[35px] text-right font-bold text-[#ff4040]">9.30</div>
        <div className="flex-1 text-right pr-[3px] font-bold text-[#333]">1311</div>
      </div>
      <div className="shrink-0 h-[272px] text-[#555] font-bold">
        {queue.map((row, i) => (
          <div key={i} className="grid grid-cols-[42px_42px_42px_42px_42px] h-[15px] items-center text-right">
            {row.map((v, j) => (
              <div key={j}>{v}</div>
            ))}
          </div>
        ))}
        <div className="w-[42px] text-right h-[15px]">....</div>
      </div>
      <div className="flex h-[17px] shrink-0 border-y border-[#ccc] text-[14px] text-[#333] items-center">
        {["队列", "分布", "龙虎", "风向", "直播"].map((t, i) => (
          <div key={t} className={`${i === 4 ? "w-[45px]" : "w-[42px]"} text-center border-r border-[#ccc] ${i === 0 ? "text-[#e80000]" : ""}`}>{t}</div>
        ))}
      </div>
    </div>
  );
}

// 亿 is drawn at the label size in the reference
const yi = (v) =>
  typeof v === "string" && v.endsWith("亿") ? (
    <>
      {v.slice(0, -1)}
      <span className="text-[16px] font-normal">亿</span>
    </>
  ) : (
    v
  );

function QuoteCell({ label, value, color, boxed }) {
  return (
    <div className="flex items-center h-[19px]">
      <div className="text-[16px] text-[#333] font-normal whitespace-nowrap">{label}</div>
      <div className={`flex-1 text-right font-bold whitespace-nowrap ${color}`}>
        {boxed ? <span className="inline-block w-[30px] h-[17px] !leading-[15px] text-center border border-[#aaa]">{value}</span> : yi(value)}
      </div>
    </div>
  );
}

const quoteRows = [
  ["现价", "9.30", "text-[#ff4040]", "今开", "8.84", "text-[#ff4040]"],
  ["涨跌", "0.85", "text-[#ff4040]", "最高", "9.30", "text-[#ff4040]", true],
  ["涨幅", "10.06%", "text-[#ff4040]", "最低", "8.84", "text-[#ff4040]"],
  ["现量", "1507", "text-[#333]", "均价", "9.27", "text-[#ff4040]"],
  ["总量", "602793", "text-[#666]", "量比", "3.10", "text-[#0078d7]"],
  ["涨停", "9.30", "text-[#ff4040]", "跌停", "7.61", "text-[#37963a]"],
  ["总笔", "16774", "text-[#333]", "每笔", "35.9", "text-[#333]"],
  ["外盘", "144212", "text-[#ff4040]", "内盘", "458581", "text-[#37963a]"],
];
const infoRows = [
  ["换手", "6.60%", "股本", "12.0亿"],
  ["净资", "2.78", "流通", "9.14亿"],
  [<>收益<span className="text-[11px]">(一)</span></>, "0.068", <><span className="text-[14px]">PE</span><span className="text-[11px]">(动)</span></>, "34.1"],
];
const flowRows = [
  ["净流入额", 21, "-2.71亿", "-49%"],
  ["大宗流入", 15, "-1.91亿", "-34%"],
  ["5日净流入额", 24, "-2.99亿", "-25%"],
  ["5日大宗流入", 16, "-2.11亿", "-18%"],
];
const tradeVols = [2, 158, 50, 2, 5, 2, 20, 20, 22, 1, 1, 5, 20, 13, 15, 5, 5, 10, 10, 10, 6, 150, 30, 28, 32, 16, 86, 66, 20, 20, 24, 52, 39, 57, 37];

function TradeRow({ time, vol, first }) {
  return (
    <div className="flex items-center h-[18px]">
      <div className={first ? "w-[57px] pl-[2px] font-bold text-[#333] whitespace-nowrap" : "w-[57px] text-right font-bold text-[#808080]"}>{time}</div>
      <div className="w-[89px] text-right font-bold text-[#ff4040]">9.30</div>
      <div className="ml-[2px] w-[5px] h-[5px] rotate-45 bg-[#ff0000]" />
      <div className="w-[55px] text-right font-bold text-[#555]">{vol}</div>
      <div className="ml-[4px] font-bold text-[#37963a]">S</div>
    </div>
  );
}

function RightCol() {
  return (
    <div className="flex flex-col flex-1 text-[14px] [&_*]:leading-none">
      <div className="flex items-center justify-center h-[28px] shrink-0 border-b-2 border-[#ff0080] pr-[20px] pt-[2px]">
        <span className="text-[10px] font-bold text-[#e02020] -mt-[8px] mr-[4px]">R</span>
        <span className="font-bold text-[#333] mr-[4px]">002325</span>
        <span className="text-[16px] text-[#0070c8]">洪涛股份</span>
      </div>
      <div className="h-[154px] shrink-0 border-b border-[#bbb] pt-[1px]">
        {quoteRows.map(([a, av, ac, b, bv, bc, boxed]) => (
          <div key={a} className="grid grid-cols-[113px_1fr] pl-[2px] pr-[2px]">
            <div className="pr-[4px]"><QuoteCell label={a} value={av} color={ac} /></div>
            <QuoteCell label={b} value={bv} color={bc} boxed={boxed} />
          </div>
        ))}
      </div>
      <div className="h-[58px] shrink-0 border-b border-[#bbb] text-[#333]">
        {infoRows.map(([a, av, b, bv]) => (
          <div key={av} className="grid grid-cols-[113px_1fr] pl-[2px] pr-[2px]">
            <div className="pr-[4px]"><QuoteCell label={a} value={av} color="text-[#333]" /></div>
            <QuoteCell label={b} value={bv} color="text-[#333]" />
          </div>
        ))}
      </div>
      <div className="h-[78px] shrink-0 border-b border-[#bbb] pt-[1px]">
        {flowRows.map(([a, w, v, p]) => (
          <div key={a} className="flex items-center h-[19px] pl-[2px] text-[#37963a]">
            <div className="w-[92px] text-[16px] text-[#333] whitespace-nowrap">{a}</div>
            <div className="w-[26px]">
              <div style={{ width: w }} className="h-[6px] bg-[#37963a]" />
            </div>
            <div className="w-[63px] text-right whitespace-nowrap">{yi(v)}</div>
            <div className="w-[40px] text-right">{p}</div>
          </div>
        ))}
      </div>
      <div className="flex-1">
        <TradeRow time="15:00:00" vol={4} first />
        {tradeVols.map((v, i) => (
          <TradeRow key={i} time={i + 8} vol={v} />
        ))}
      </div>
      <div className="flex h-[17px] shrink-0 border-y border-[#ccc] items-center text-[14px] text-[#333]">
        {["笔", "价", "细", "日", "势", "联", "值", "筹"].map((t) => (
          <div key={t} className={`w-[28px] text-center border-r border-[#ccc] ${t === "细" ? "text-[#e80000]" : ""}`}>{t}</div>
        ))}
      </div>
    </div>
  );
}

const indices = [
  ["上证", "2931.59", "19.03", "0.65%", "2234亿", "text-[#e00000]"],
  ["深证", "10461.0", "-2.48", "-0.02%", "4209亿", "text-[#008000]"],
  ["中小", "6886.86", "-8.59", "-0.12%", "1972亿", "text-[#008000]"],
  ["沪深", "3151.39", "14.99", "0.48%", "1180亿", "text-[#e00000]"],
  ["创业", "2209.79", "-6.92", "-0.31%", "1395亿", "text-[#008000]"],
];

function StatusIcons() {
  return (
    <div className="flex items-center gap-[5px] pr-[8px]">
      <svg width="14" height="13" viewBox="0 0 14 13"><rect x="0.5" y="0.5" width="13" height="12" fill="#fafafa" stroke="#777" /><path d="M2 3.5H12M2 6.5H12M2 9.5H12" stroke="#aaa" /></svg>
      <svg width="13" height="13" viewBox="0 0 13 13"><circle cx="6.5" cy="6.5" r="6" fill="#e8d820" stroke="#a09000" /><path d="M6.5 3 L9 6.5 H4 Z M5 7.5 H8 V10 H5 Z" fill="#807000" /></svg>
      <svg width="12" height="14" viewBox="0 0 12 14"><path d="M6 3 L2 14 M6 3 L10 14 M3.5 10 H8.5" stroke="#888" fill="none" /><path d="M1 3 Q6 -2 11 3" stroke="#999" fill="none" /><circle cx="6" cy="3" r="1.3" fill="#555" /></svg>
      <svg width="9" height="14" viewBox="0 0 9 14"><path d="M4.5 0 L8 4 H1 Z" fill="#e00000" /><path d="M4.5 4 L8 8.5 H1 Z" fill="#e8d800" /><path d="M4.5 9 L8 13.5 H1 Z" fill="#008000" /></svg>
      <div className="ml-[4px] text-[12px] font-bold text-[#999]">!</div>
    </div>
  );
}

function StatusBar() {
  return (
    <div className="relative flex items-center h-[23px] shrink-0 bg-[#f0f0f0] border-b-2 border-[#333] text-[12px] whitespace-nowrap">
      {indices.map(([name, price, chg, pct, amt, color]) => (
        <div key={name} className="flex w-[215px] shrink-0">
          <div className="w-[26px] text-[#222]">{name}</div>
          <div className={`w-[48px] font-bold ${color}`}>{price}</div>
          <div className={`w-[42px] text-right font-bold ${color}`}>{chg}</div>
          <div className={`w-[44px] text-right font-bold ${color}`}>{pct}</div>
          <div className="w-[46px] text-right text-[#222]">{amt}</div>
        </div>
      ))}
      <div className="flex h-full items-center w-[109px] ml-[2px] border-x border-[#bbb] pl-[2px] text-[#222]">
        <div className="w-[52px]">总成交</div>
        <div>6443亿</div>
      </div>
      <div className="pl-[4px] text-[#222]">高级行情_上海电信5</div>
      <div className="ml-auto"><StatusIcons /></div>
    </div>
  );
}

export default function App() {
  return (
    <div className="relative w-[1920px] h-[1041px] overflow-hidden flex flex-col bg-[#fdfdfd] [font-family:'Liberation_Sans','Noto_Sans_CJK_SC',sans-serif]">
      <TitleBar />
      <div className="flex flex-1 min-h-0">
        <div className="flex flex-col w-[1484px] shrink-0 border-r border-[#bbb]">
          <PeriodRow />
          <MainPane />
          <VolPane />
          <SysPane />
          <DateRow />
          <IndicatorTabs />
        </div>
        <MiddleCol />
        <RightCol />
      </div>
      <StatusBar />
      {/* watermark over the tabs */}
      <div className="absolute left-[1808px] top-[1004px] scale-y-150 text-[17px] font-bold text-white [text-shadow:1px_1px_2px_#555] tracking-[-0.5px] whitespace-nowrap">178448.COM</div>
    </div>
  );
}
